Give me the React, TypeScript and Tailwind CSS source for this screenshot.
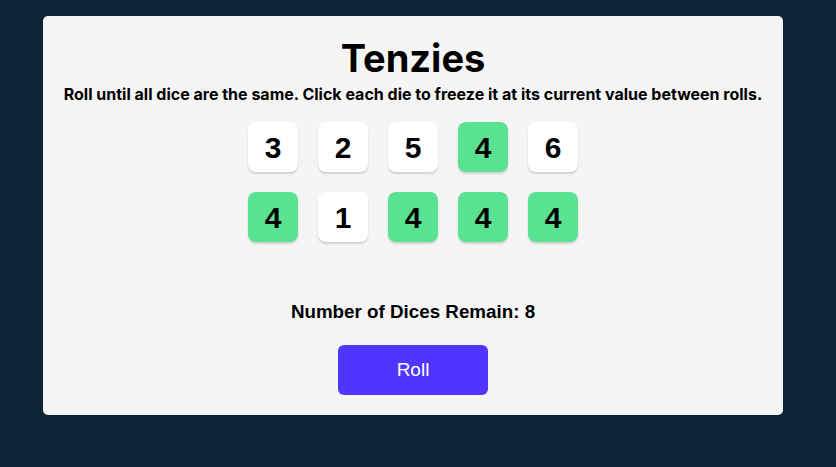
import React, { useState } from 'react';

type Die = { id: number; value: number; held: boolean };

const initialDice: Die[] = [
  { id: 1, value: 3, held: false },
  { id: 2, value: 2, held: false },
  { id: 3, value: 5, held: false },
  { id: 4, value: 4, held: true },
  { id: 5, value: 6, held: false },
  { id: 6, value: 4, held: true },
  { id: 7, value: 1, held: false },
  { id: 8, value: 4, held: true },
  { id: 9, value: 4, held: true },
  { id: 10, value: 4, held: true },
];

const DieFace: React.FC<{ die: Die; onClick: () => void }> = ({ die, onClick }) => (
  <button
    onClick={onClick}
    className={`w-[50px] h-[50px] rounded-lg flex items-center justify-center shadow-[0_2px_2px_rgba(0,0,0,0.15)] font-['Liberation_Sans',Arial,sans-serif] font-bold text-[30px] text-black ${
      die.held ? 'bg-[#59E391]' : 'bg-white'
    }`}
  >
    {die.value}
  </button>
);

export default function App() {
  const [dice, setDice] = useState<Die[]>(initialDice);
  const [remaining, setRemaining] = useState(8);

  const toggle = (id: number) => {
    setDice(prev => prev.map(d => (d.id === id ? { ...d, held: !d.held } : d)));
  };

  const roll = () => {
    setDice(prev => prev.map(d => (d.held ? d : { ...d, value: Math.ceil(Math.random() * 6) })));
    setRemaining(r => Math.max(0, r - 1));
  };

  return (
    <div className="min-h-[467px] w-full bg-[#0B2434] pt-[16px] pl-[43px]">
      <main className="w-[740px] h-[399px] bg-[#F5F5F5] rounded-[5px] flex flex-col items-center">
        <h1 className="mt-[21px] font-['Inter',sans-serif] font-bold text-[38px] leading-[42px] text-black">Tenzies</h1>
        <p className="mt-[5px] font-['Inter',sans-serif] font-bold text-[16px] leading-[20px] text-black">
          Roll until all dice are the same. Click each die to freeze it at its current value between rolls.
        </p>
        <div className="mt-[18px] grid grid-cols-5 gap-[20px]">
          {dice.map(d => (
            <DieFace key={d.id} die={d} onClick={() => toggle(d.id)} />
          ))}
        </div>
        <p className="mt-[59px] font-['Liberation_Sans',Arial,sans-serif] font-bold text-[18.8px] leading-[22px] text-black">
          Number of Dices Remain: {remaining}
        </p>
        <button
          onClick={roll}
          className="mt-[22px] w-[150px] h-[50px] rounded-md bg-[#5035FF] text-white font-['Liberation_Sans',Arial,sans-serif] text-[19px]"
        >
          Roll
        </button>
      </main>
    </div>
  );
}
